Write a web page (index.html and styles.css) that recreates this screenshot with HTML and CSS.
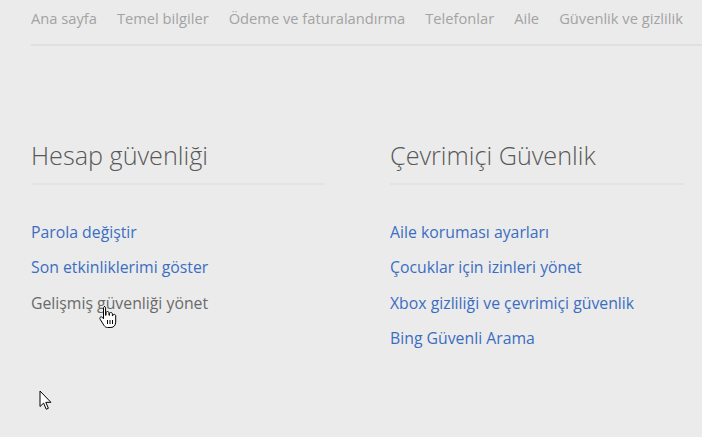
FILE: index.html
```html
<!DOCTYPE html>
<html lang="tr">
<head>
  <meta charset="UTF-8">
  <title>Güvenlik ve gizlilik</title>
  <link rel="stylesheet" href="styles.css">
</head>
<body>
  <nav class="topnav">
    <a href="#">Ana sayfa</a>
    <a href="#">Temel bilgiler</a>
    <a href="#">Ödeme ve faturalandırma</a>
    <a href="#">Telefonlar</a>
    <a href="#">Aile</a>
    <a href="#">Güvenlik ve gizlilik</a>
  </nav>

  <div class="sections">
    <section class="panel">
      <h2>Hesap güvenliği</h2>
      <ul class="links">
        <li><a href="#">Parola değiştir</a></li>
        <li><a href="#">Son etkinliklerimi göster</a></li>
        <li><a href="#" class="hover">Gelişmiş güvenliği yönet</a></li>
      </ul>
    </section>
    <section class="panel">
      <h2>Çevrimiçi Güvenlik</h2>
      <ul class="links">
        <li><a href="#">Aile koruması ayarları</a></li>
        <li><a href="#">Çocuklar için izinleri yönet</a></li>
        <li><a href="#">Xbox gizliliği ve çevrimiçi güvenlik</a></li>
        <li><a href="#">Bing Güvenli Arama</a></li>
      </ul>
    </section>
  </div>

  <!-- mouse pointers from the screen capture -->
  <svg class="cursor hand" width="20" height="24" viewBox="0 0 20 24">
    <path d="M6 1.5c1 0 1.6.7 1.6 1.6v7.2h.4V8c0-.9.7-1.5 1.5-1.5s1.5.6 1.5 1.5v2.3h.4V9c0-.9.7-1.5 1.5-1.5s1.5.6 1.5 1.5v1.8h.4c0-.8.7-1.4 1.5-1.4s1.4.6 1.4 1.5v6.2c0 2.8-1.8 5.4-4.8 5.4H9.5c-1.6 0-2.6-.8-3.5-2L2.2 14.3c-.6-.9-.4-1.8.3-2.2.7-.4 1.6-.2 2.2.6l.8 1.1V3.1c0-.9.6-1.6 1.5-1.6z" fill="#fff" stroke="#000" stroke-width="1"/>
    <path d="M9.5 15v4M12 15v4M14.5 15v4" stroke="#000" stroke-width="1"/>
  </svg>
  <svg class="cursor arrow" width="14" height="22" viewBox="0 0 14 22">
    <path d="M1 1v15.5l3.6-3.4 2.6 6.1 2.2-.9-2.6-6h5.1z" fill="#fff" stroke="#000" stroke-width="1"/>
  </svg>
</body>
</html>
```

FILE: styles.css
```css
body {
  margin: 0;
  background-color: #ebebeb;
  font-family: "Open Sans", "Segoe UI", sans-serif;
  color: #555;
  height: 437px;
  overflow: hidden;
  position: relative;
}

a {
  text-decoration: none;
}

.topnav {
  display: flex;
  gap: 20px;
  margin-left: 31px;
  padding: 9px 0 17px;
  border-bottom: 2px solid #e0e0e0;
}

.topnav a {
  color: #a3a3a3;
  font-size: 14.7px;
  line-height: 18px;
}

.sections {
  display: flex;
  gap: 65px;
  padding: 91px 0 0 31px;
}

.panel {
  width: 294px;
}

.panel h2 {
  margin: 0;
  font-size: 25.2px;
  font-weight: 300;
  color: #585858;
  line-height: 36px;
  padding-bottom: 10px;
  border-bottom: 2px solid #e3e3e3;
}

.links {
  list-style: none;
  margin: 36px 0 0;
  padding: 0;
}

.links li {
  height: 35.3px;
  line-height: 22px;
}

.links a {
  font-size: 15.8px;
  color: #3b6ec2;
}

.links a.hover {
  color: #6a6a6a;
}

.cursor {
  position: absolute;
}

.hand {
  left: 98px;
  top: 305px;
}

.arrow {
  left: 39px;
  top: 390px;
}
```
